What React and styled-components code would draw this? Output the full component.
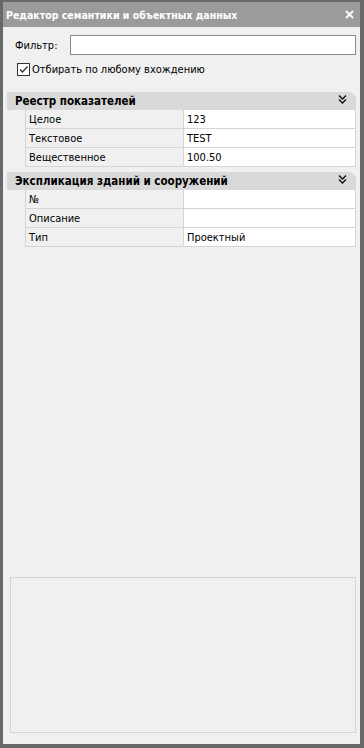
import React from 'react';
import styled, { createGlobalStyle } from 'styled-components';

const GlobalStyle = createGlobalStyle`
  html, body {
    margin: 0;
    padding: 0;
    background: #f0f0f0;
  }
  * {
    box-sizing: border-box;
  }
`;

const sections = [
  {
    title: 'Реестр показателей',
    rows: [
      ['Целое', '123'],
      ['Текстовое', 'TEST'],
      ['Вещественное', '100.50'],
    ],
  },
  {
    title: 'Экспликация зданий и сооружений',
    rows: [
      ['№', ''],
      ['Описание', ''],
      ['Тип', 'Проектный'],
    ],
  },
];

export default function App() {
  return (
    <>
      <GlobalStyle />
      <Window>
        <TitleBar>
          <Title>Редактор семантики и объектных данных</Title>
          <CloseIcon />
        </TitleBar>
        <Body>
          <FilterRow>
            <Label>Фильтр:</Label>
            <Input />
          </FilterRow>
          <CheckRow>
            <CheckBox>
              <svg width="11" height="11" viewBox="0 0 11 11">
                <path d="M2 5.5 L4.5 8 L9.5 2.5" fill="none" stroke="#333" strokeWidth="1.3" />
              </svg>
            </CheckBox>
            <span>Отбирать по любому вхождению</span>
          </CheckRow>

          <Sections>
            {sections.map((section) => (
              <Section key={section.title}>
                <SectionHeader>
                  <span>{section.title}</span>
                  <Chevrons />
                </SectionHeader>
                <Grid>
                  {section.rows.map(([name, value]) => (
                    <Row key={name}>
                      <NameCell>{name}</NameCell>
                      <ValueCell>{value}</ValueCell>
                    </Row>
                  ))}
                </Grid>
              </Section>
            ))}
          </Sections>

          <Spacer />
          <DescriptionBox />
        </Body>
      </Window>
    </>
  );
}

function CloseIcon() {
  return (
    <CloseSvg width="9" height="9" viewBox="0 0 9 9">
      <path d="M1 1 L8 8 M8 1 L1 8" stroke="#fff" strokeWidth="1.8" />
    </CloseSvg>
  );
}

function Chevrons() {
  return (
    <ChevronSvg width="9" height="9" viewBox="0 0 9 9">
      <path d="M1 0.5 L4.5 4 L8 0.5 M1 4.5 L4.5 8 L8 4.5" fill="none" stroke="#111" strokeWidth="1.4" />
    </ChevronSvg>
  );
}

const Window = styled.div`
  width: 364px;
  height: 748px;
  display: flex;
  flex-direction: column;
  border-style: solid;
  border-color: #686868;
  border-width: 2px 4px 4px 3px;
  background: #f0f0f0;
  font-family: 'DejaVu Sans Condensed', 'Liberation Sans', Arial, sans-serif;
  font-size: 11px;
  color: #000;
`;

const TitleBar = styled.div`
  height: 25px;
  flex: none;
  display: flex;
  align-items: center;
  justify-content: space-between;
  padding: 0 6px 0 3px;
  background: #9b9b9b;
`;

const Title = styled.div`
  color: #fff;
  font-weight: bold;
  font-size: 10.5px;
`;

const CloseSvg = styled.svg`
  display: block;
`;

const Body = styled.div`
  flex: 1;
  display: flex;
  flex-direction: column;
  padding: 8px 4px 11px 4px;
`;

const FilterRow = styled.div`
  display: flex;
  align-items: center;
  padding-left: 8px;
  height: 20px;
`;

const Label = styled.span`
  width: 55px;
`;

const Input = styled.div`
  flex: 1;
  height: 20px;
  background: #fff;
  border: 1px solid #8a8a8a;
`;

const CheckRow = styled.div`
  display: flex;
  align-items: center;
  gap: 2px;
  margin-top: 8px;
  padding-left: 10px;
  height: 13px;
`;

const CheckBox = styled.div`
  width: 13px;
  height: 13px;
  border: 1px solid #333;
  background: #fff;
  display: flex;
  align-items: center;
  justify-content: center;
`;

const Sections = styled.div`
  display: flex;
  flex-direction: column;
  gap: 5px;
  margin-top: 16px;
`;

const Section = styled.div`
  display: flex;
  flex-direction: column;
`;

const SectionHeader = styled.div`
  height: 18px;
  display: flex;
  align-items: center;
  justify-content: space-between;
  padding: 0 9px 0 8px;
  background: #d9d9d9;
  font-weight: bold;
  font-size: 11.5px;
  clip-path: polygon(0 0, calc(100% - 5px) 0, 100% 5px, 100% 100%, 0 100%);
`;

const ChevronSvg = styled.svg`
  display: block;
  margin-top: -3px;
`;

const Grid = styled.div`
  margin-left: 18px;
  display: flex;
  flex-direction: column;
  border-left: 1px solid #d4d4d4;
`;

const Row = styled.div`
  display: grid;
  grid-template-columns: 158px 1fr;
  height: 19px;
  border-bottom: 1px solid #d4d4d4;
`;

const NameCell = styled.div`
  display: flex;
  align-items: center;
  padding-left: 3px;
  background: #f0f0f0;
  border-right: 1px solid #d4d4d4;
`;

const ValueCell = styled.div`
  display: flex;
  align-items: center;
  padding-left: 3px;
  background: #fff;
  border-right: 1px solid #d4d4d4;
`;

const Spacer = styled.div`
  flex: 1;
`;

const DescriptionBox = styled.div`
  height: 156px;
  margin-left: 3px;
  border: 1px solid #d4d4d4;
`;
